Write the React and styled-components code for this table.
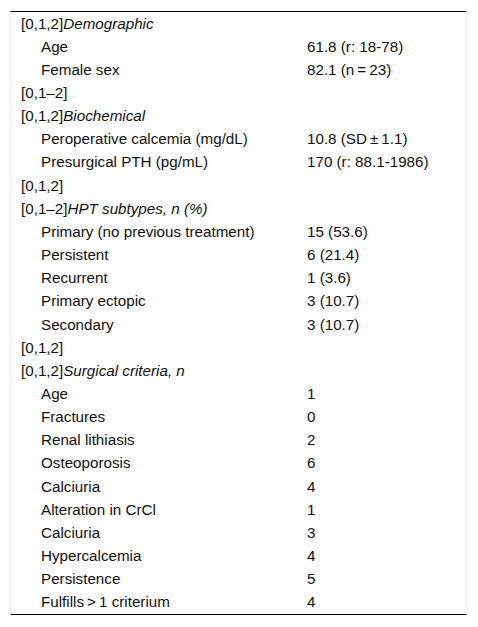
import styled, { createGlobalStyle } from "styled-components";

const GlobalStyle = createGlobalStyle`
  body {
    margin: 0;
    background: #ffffff;
    font-family: "Liberation Sans", Arial, sans-serif;
  }
`;

const rows = [
  { prefix: "[0,1,2]", title: "Demographic" },
  { label: "Age", value: "61.8 (r: 18-78)" },
  { label: "Female sex", value: "82.1 (n\u2009=\u200923)" },
  { prefix: "[0,1\u20132]" },
  { prefix: "[0,1,2]", title: "Biochemical" },
  { label: "Peroperative calcemia (mg/dL)", value: "10.8 (SD\u2009\u00b1\u20091.1)" },
  { label: "Presurgical PTH (pg/mL)", value: "170 (r: 88.1-1986)" },
  { prefix: "[0,1,2]" },
  { prefix: "[0,1\u20132]", title: "HPT subtypes, n (%)" },
  { label: "Primary (no previous treatment)", value: "15 (53.6)" },
  { label: "Persistent", value: "6 (21.4)" },
  { label: "Recurrent", value: "1 (3.6)" },
  { label: "Primary ectopic", value: "3 (10.7)" },
  { label: "Secondary", value: "3 (10.7)" },
  { prefix: "[0,1,2]" },
  { prefix: "[0,1,2]", title: "Surgical criteria, n" },
  { label: "Age", value: "1" },
  { label: "Fractures", value: "0" },
  { label: "Renal lithiasis", value: "2" },
  { label: "Osteoporosis", value: "6" },
  { label: "Calciuria", value: "4" },
  { label: "Alteration in CrCl", value: "1" },
  { label: "Calciuria", value: "3" },
  { label: "Hypercalcemia", value: "4" },
  { label: "Persistence", value: "5" },
  { label: "Fulfills\u2009>\u20091 criterium", value: "4" },
];

const App = () => {
  return (
    <>
      <GlobalStyle />
      <Page>
        <Table>
          {rows.map((row, i) =>
            row.label ? (
              <Row key={i}>
                <Cell $indent>{row.label}</Cell>
                <Cell>{row.value}</Cell>
              </Row>
            ) : (
              <Row key={i}>
                <Cell>
                  {row.prefix}
                  {row.title && <Em>{row.title}</Em>}
                </Cell>
                <Cell />
              </Row>
            )
          )}
        </Table>
      </Page>
    </>
  );
};
export default App;

const Page = styled.div`
  padding: 11px 10px 12px 10px;
`;

const Table = styled.div`
  width: 457px;
  border-top: 1px solid #000;
  border-bottom: 1px solid #000;
  border-left: 1px solid #ececec;
  border-right: 1px solid #ececec;
  box-sizing: border-box;
`;

const Row = styled.div`
  display: grid;
  grid-template-columns: 286px 1fr;
`;

const Cell = styled.div`
  padding: 2.5px 10px 3.5px;
  padding-left: ${(p) => (p.$indent ? "30px" : "10px")};
  font-size: 15.2px;
  line-height: 17.15px;
  color: #111;
  white-space: nowrap;
`;

const Em = styled.i`
  font-style: italic;
`;
